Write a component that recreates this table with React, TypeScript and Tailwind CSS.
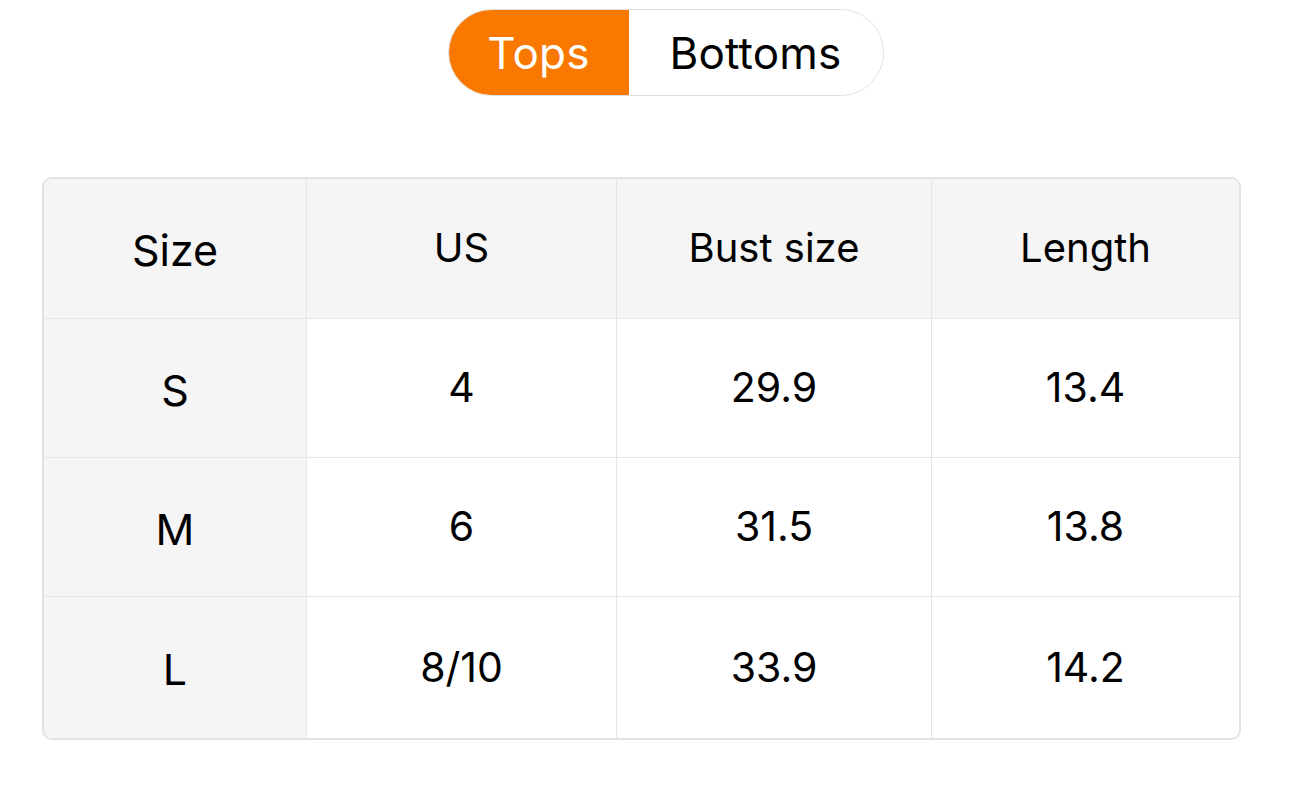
import React from "react";

const rows = [
  ["S", "4", "29.9", "13.4"],
  ["M", "6", "31.5", "13.8"],
  ["L", "8/10", "33.9", "14.2"],
];

export default function App() {
  return (
    <div className="w-[1290px] h-[787px] bg-white text-black" style={{ fontFamily: "Inter, 'Noto Sans', sans-serif" }}>
      <div className="flex justify-center pt-[9px] pl-[41px]">
        <div className="flex h-[87px] rounded-full border border-[#dedede] overflow-hidden">
          <div className="w-[180px] bg-[#f87800] text-white flex items-center justify-center text-[44px] tracking-[0.2px]">Tops</div>
          <div className="w-[254px] bg-white flex items-center justify-center text-[44px] tracking-[0.2px]">Bottoms</div>
        </div>
      </div>
      <div className="ml-[42px] w-[1199px] mt-[81px] border-2 border-[#e2e2e2] rounded-[10px] overflow-hidden">
        <div className="grid grid-cols-[263px_310px_315px_1fr]">
          {["Size", "US", "Bust size", "Length"].map((h, i) => (
            <div
              key={h}
              className={`h-[140px] bg-[#f5f5f5] flex items-center justify-center border-b border-[#e6e6e6] ${i < 3 ? "border-r" : ""} ${i === 0 ? "text-[43px] pt-[4px]" : "text-[40px] pb-[1px]"}`}
            >
              {h}
            </div>
          ))}
          {rows.map((r, ri) =>
            r.map((c, ci) => (
              <div
                key={ri + "-" + ci}
                className={`${ri === 2 ? "h-[141px]" : "h-[139px]"} flex items-center justify-center border-[#e6e6e6] ${ri < 2 ? "border-b" : ""} ${ci < 3 ? "border-r" : ""} ${ci === 0 ? "bg-[#f5f5f5] text-[43px] pt-[4px]" : "bg-white text-[41px]"}`}
              >
                {c}
              </div>
            ))
          )}
        </div>
      </div>
    </div>
  );
}
